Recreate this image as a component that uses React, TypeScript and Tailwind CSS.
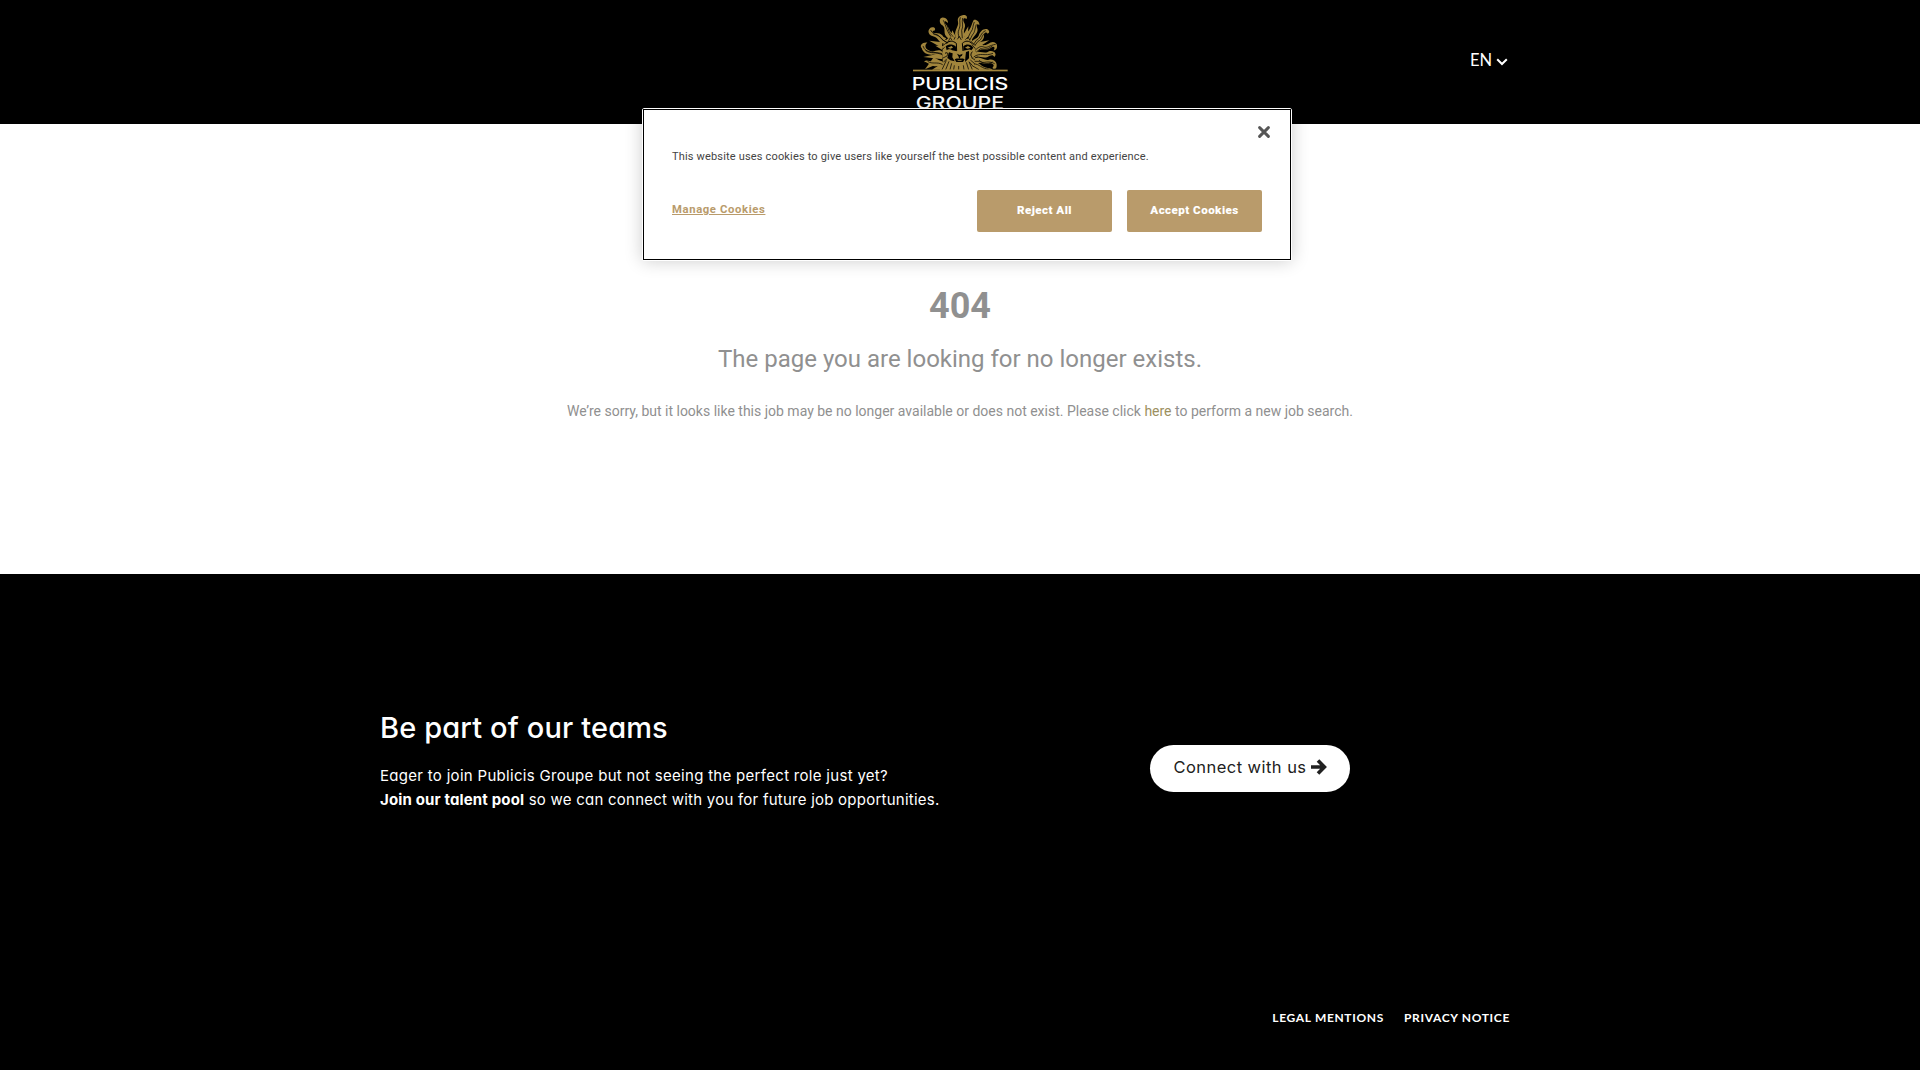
import React from "react";

const wavyRays = [
  "M152 118 C122 106 142 86 127 76 C117 70 117 54 126 53 C137 51 145 61 144 69 C135 61 131 63 136 71 C150 82 146 96 164 106 Z",
  "M169 112 C157 96 178 80 174 65 C171 52 180 45 195 45 C203 48 201 54 200 57 C192 51 186 57 193 69 C200 82 187 87 194 111 Z",
  "M195 116 C192 104 202 98 207 91 C215 80 216 68 221 60 C228 57 240 65 238 76 C232 68 229 75 231 82 C238 100 222 105 214 122 Z",
  "M138 132 C112 130 119 114 99 109 C81 105 82 85 96 82 C105 81 108 88 103 92 C95 91 97 98 103 99 C126 98 130 109 132 115 C136 121 142 121 149 125 Z",
  "M213 132 C218 113 230 120 236 107 C240 94 249 85 261 87 C271 93 268 99 263 101 C257 93 250 101 252 111 C248 128 235 123 231 138 Z",
  "M128 156 C112 142 104 162 86 151 C75 145 73 134 82 128 C66 126 58 138 65 144 C69 160 84 165 96 164 C111 162 116 171 128 166 Z",
  "M223 147 C238 127 250 141 264 132 C274 125 283 122 290 133 C294 143 288 152 281 151 C287 143 282 137 273 143 C258 156 242 139 229 159 Z",
  "M219 166 C235 148 250 166 267 154 C284 150 292 164 283 171 C279 163 271 166 263 171 C243 178 231 160 222 178 Z",
  "M218 180 C240 161 250 185 267 179 C283 175 294 189 289 203 C284 210 274 205 279 201 C285 196 277 189 269 190 C248 197 240 178 224 196 Z",
  "M130 187 C112 174 110 194 91 184 C79 179 71 181 74 187 C80 182 91 203 111 198 C119 197 123 202 131 200 Z",
  "M217 188 C231 180 240 196 253 201 C262 206 273 203 278 209 L223 210 Z",
];

const spikes = [
  "M128 126 L109 101 L139 115 Z", "M152 108 L157 91 L168 111 Z", "M188 107 L205 79 L203 112 Z",
  "M218 125 L246 107 L232 139 Z", "M126 144 L88 122 L127 127 Z", "M128 178 L70 171 L128 158 Z",
  "M127 189 L96 209 L141 209 Z", "M101 172 L75 208 L127 186 Z", "M225 149 L268 121 L244 125 L219 132 Z",
  "M224 154 L278 161 L224 169 Z", "M128 151 L106 137 L129 138 Z",
];

const grooves = [
  "M130 61 C139 78 137 87 153 110", "M138 71 C148 85 142 95 160 110",
  "M181 52 C176 63 184 74 177 88 C172 99 176 104 177 114", "M188 54 C184 68 192 76 185 91 L187 115",
  "M223 66 C217 79 221 86 212 97 L202 117", "M229 73 C223 90 226 95 217 105 L209 121",
  "M92 90 C99 108 121 104 127 119 L142 129", "M100 102 C119 102 119 114 130 121 L144 129",
  "M257 92 C241 98 243 115 229 121 L220 134", "M253 101 C245 106 247 119 234 124 L225 136",
  "M69 138 C77 162 102 154 126 161", "M76 151 C91 163 108 154 128 165",
  "M287 133 C267 136 263 145 251 141 C241 137 236 142 226 150", "M277 138 C262 150 252 148 242 146 L229 156",
  "M279 160 C255 170 241 156 221 171", "M284 191 C262 179 253 193 239 184 L224 184",
  "M278 186 C260 194 250 191 237 181", "M83 184 C96 194 112 184 128 194", "M222 192 C238 191 245 207 266 207", "M220 199 L237 209",
];

const hairStrands = [
  "M128 137 L146 124 M126 149 L134 142 M127 175 L139 169 M130 187 L141 176",
  "M212 123 L226 137 M216 134 L226 146 M214 173 L225 180 M211 180 L224 191 M208 186 L221 201",
  "M139 181 L126 209 M147 184 L137 209 M155 190 L150 209 M163 196 L161 209",
  "M199 187 L206 209 M207 185 L217 209 M190 196 L192 209 M176 198 L176 209",
  "M145 124 L151 113 L156 121 M162 119 L166 110 M172 118 L178 109 L184 120 M196 119 L204 111 L210 121",
];

function SunLogo() {
  return (
    <svg viewBox="36 39 291 296" className="h-[98.67px] w-[97px] shrink-0" aria-label="Publicis Groupe">
      <g fill="#a1853c">
        {spikes.map((d) => <path key={d} d={d} />)}
        {wavyRays.map((d) => <path key={d} d={d} />)}
        <path d="M128 148 C127 124 143 108 174 107 C205 106 226 118 225 148 C226 174 218 186 230 210 L119 210 C135 188 125 173 128 148 Z" />
      </g>
      <g fill="none" stroke="#000" strokeWidth="2.2">
        {grooves.map((d) => <path key={d} d={d} />)}
        {hairStrands.map((d) => <path key={d} d={d} />)}
      </g>
      <g>
        <path d="M137 139 C146 131 158 132 167 139 L170 154 L156 151 C152 146 144 148 140 151 Z" />
        <path d="M190 139 C199 131 213 132 220 143 L214 151 C208 146 203 151 190 152 Z" />
        <path d="M147 157 L158 160 L157 172 L164 184 L151 181 L142 173 Z" />
        <path d="M198 156 L207 153 L207 175 L195 186 L196 173 Z" />
        <path d="M170 160 C173 165 175 162 179 165 C183 162 187 165 188 160 L186 167 L181 170 L180 175 L177 175 L176 170 Z" />
        <path d="M164 178 C170 173 174 177 179 175 C184 177 188 173 194 178 L189 186 L169 186 Z" />
      </g>
      <g fill="none" stroke="#000" strokeWidth="3">
        <path d="M139 130 C149 121 159 122 169 130 L170 153 M218 132 C205 120 196 122 187 130 L189 153" />
        <path d="M135 160 C145 154 146 165 139 169 M217 155 C210 164 213 168 217 173" />
      </g>
      <path d="M143 143 L155 138 L159 143 L151 146 Z M195 143 L204 138 L212 143 L203 146 Z M171 181 L187 181 L183 183 L175 183 Z" fill="#a1853c" />
      <rect x="39" y="209" width="284" height="5" fill="#a1853c" />
      <g fill="#fff" fontFamily="Inter" fontWeight="500" fontSize="51">
        <text x="35" y="269" textLength="290" lengthAdjust="spacingAndGlyphs">PUBLICIS</text>
        <text x="47" y="327" textLength="265" lengthAdjust="spacingAndGlyphs">GROUPE</text>
      </g>
    </svg>
  );
}

function CookieBanner() {
  return (
    <div role="dialog" className="absolute left-[642px] top-[108px] h-[153px] w-[650px] rounded-[2.5px] bg-white p-px shadow-[0_0_18px_rgba(0,0,0,0.2)]">
      <div className="flex h-[151px] flex-col border border-black px-[28px]">
        <div className="flex h-[39px] items-start justify-end pt-[16px]">
          <svg viewBox="0 0 12 12" className="-mr-[8px] size-[12px]" stroke="#565656" strokeWidth="2.9" strokeLinecap="round">
            <path d="M1.6 1.6 10.4 10.4M10.4 1.6 1.6 10.4" />
          </svg>
        </div>
        <p className="whitespace-nowrap text-[11px] leading-[16px] tracking-[0.17px] text-[#444]">
          This website uses cookies to give users like yourself the best possible content and experience.
        </p>
        <div className="mt-[25px] flex h-[42px] items-center">
          <a className="mr-auto mt-[-2px] text-[11.3px] font-bold tracking-[0.62px] text-[#b99b6b] underline">Manage Cookies</a>
          <button className="h-[42px] w-[135px] rounded-[2px] bg-[#b99b6b] text-[11.6px] font-black tracking-[0.45px] text-white">Reject All</button>
          <button className="ml-[15px] h-[42px] w-[135px] rounded-[2px] bg-[#b99b6b] text-[11.6px] font-black tracking-[0.45px] text-white">Accept Cookies</button>
        </div>
      </div>
    </div>
  );
}

export default function App() {
  return (
    <div className="relative h-[1080px] w-[1920px] overflow-hidden bg-white font-['Roboto',sans-serif]">
      <header className="grid h-[124px] grid-cols-[912px_97px_1fr] bg-black pt-[13px]">
        <span />
        <SunLogo />
        <div className="flex h-[94px] items-center pl-[461px]">
          <span className="font-['Lato',sans-serif] text-[16.5px] leading-5 text-white">EN</span>
          <svg viewBox="0 0 12 8" className="ml-[4px] mt-[3px] h-[8px] w-[12px]" fill="none" stroke="#fff" strokeWidth="2">
            <path d="M1.2 1.2 6 6 10.8 1.2" />
          </svg>
        </div>
      </header>
      <main className="flex h-[450px] flex-col items-center text-[#909090]">
        <h1 className="mt-[162px] text-[36px] font-bold leading-[40px]">404</h1>
        <h2 className="mt-[18px] text-[24px] leading-[30px]">The page you are looking for no longer exists.</h2>
        <p className="mt-[27px] text-[14px] leading-[20px]">
          We’re sorry, but it looks like this job may be no longer available or does not exist. Please click <a className="text-[#9c9060]">here</a> to perform a new job search.
        </p>
      </main>
      <footer className="flex h-[496px] flex-col bg-black px-[380px] font-['Inter',sans-serif] text-white [font-feature-settings:'cv11']">
        <div className="flex pt-[134px]">
          <div className="w-[770px]">
            <h3 className="text-[29px] font-medium leading-[40px] tracking-[0.14px]">Be part of our teams</h3>
            <p className="mt-[16px] whitespace-nowrap text-[15px] leading-6 tracking-[0.3px]">
              Eager to join Publicis Groupe but not seeing the perfect role just yet?<br />
              <b className="tracking-[0.15px]">Join our talent pool</b>
              <span className="tracking-[0.24px]"> so we can connect with you for future job opportunities.</span>
            </p>
          </div>
          <a className="mt-[37px] flex h-[47px] w-[200px] items-center justify-center gap-[4px] rounded-full bg-white pb-[3px] text-[16.5px] tracking-[0.45px] text-[#212121]">
            Connect with us
            <svg viewBox="0 0 16 16" className="size-[16px]" fill="none" stroke="#212121" strokeWidth="3.6">
              <path d="M0 8H13M7 1.5 13.4 8 7 14.5" />
            </svg>
          </a>
        </div>
        <nav className="mt-auto mb-[42px] flex justify-end gap-[20px] pr-[30px] font-['Lato',sans-serif] text-[12px] font-bold leading-5 tracking-[0.66px]">
          <a>LEGAL MENTIONS</a>
          <a>PRIVACY NOTICE</a>
        </nav>
      </footer>
      <CookieBanner />
    </div>
  );
}
